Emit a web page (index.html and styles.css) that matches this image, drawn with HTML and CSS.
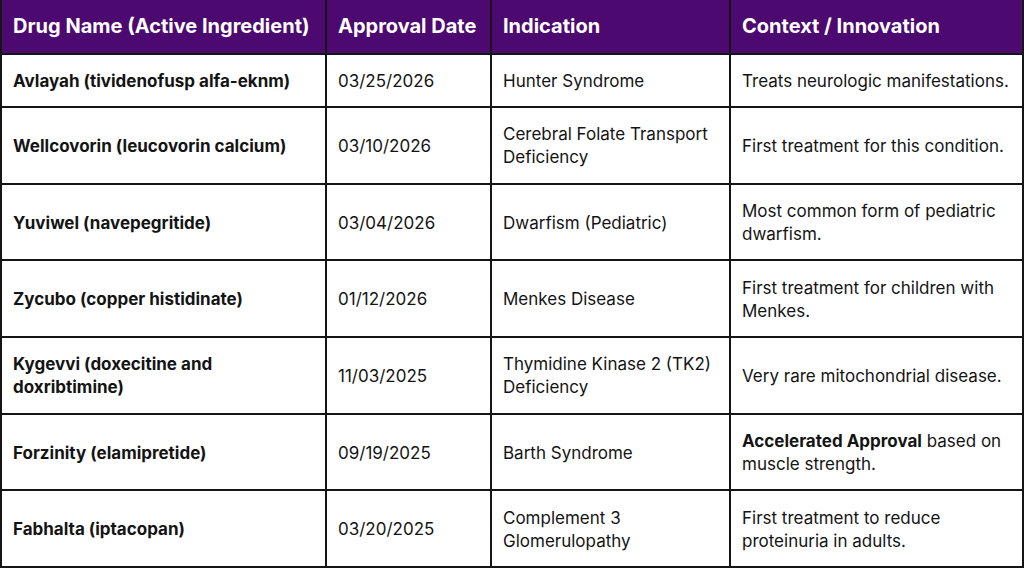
FILE: index.html
```html
<!DOCTYPE html>
<html lang="en">
<head>
<meta charset="utf-8">
<title>Drug Approvals</title>
<link rel="stylesheet" href="styles.css">
</head>
<body>
<table class="drugs">
  <colgroup>
    <col class="c1"><col class="c2"><col class="c3"><col class="c4">
  </colgroup>
  <thead>
    <tr>
      <th>Drug Name (Active Ingredient)</th>
      <th>Approval Date</th>
      <th>Indication</th>
      <th>Context / Innovation</th>
    </tr>
  </thead>
  <tbody>
    <tr class="short">
      <td class="name">Avlayah (tividenofusp alfa-eknm)</td>
      <td>03/25/2026</td>
      <td>Hunter Syndrome</td>
      <td>Treats neurologic manifestations.</td>
    </tr>
    <tr>
      <td class="name">Wellcovorin (leucovorin calcium)</td>
      <td>03/10/2026</td>
      <td>Cerebral Folate Transport Deficiency</td>
      <td>First treatment for this condition.</td>
    </tr>
    <tr>
      <td class="name">Yuviwel (navepegritide)</td>
      <td>03/04/2026</td>
      <td>Dwarfism (Pediatric)</td>
      <td>Most common form of pediatric dwarfism.</td>
    </tr>
    <tr>
      <td class="name">Zycubo (copper histidinate)</td>
      <td>01/12/2026</td>
      <td>Menkes Disease</td>
      <td>First treatment for children with Menkes.</td>
    </tr>
    <tr>
      <td class="name">Kygevvi (doxecitine and doxribtimine)</td>
      <td>11/03/2025</td>
      <td>Thymidine Kinase 2 (TK2) Deficiency</td>
      <td>Very rare mitochondrial disease.</td>
    </tr>
    <tr>
      <td class="name">Forzinity (elamipretide)</td>
      <td>09/19/2025</td>
      <td>Barth Syndrome</td>
      <td><strong>Accelerated Approval</strong> based on muscle strength.</td>
    </tr>
    <tr>
      <td class="name">Fabhalta (iptacopan)</td>
      <td>03/20/2025</td>
      <td>Complement 3 Glomerulopathy</td>
      <td>First treatment to reduce proteinuria in adults.</td>
    </tr>
  </tbody>
</table>
</body>
</html>
```

FILE: styles.css
```css
html, body {
  margin: 0;
  padding: 0;
  background: #ffffff;
}

body {
  font-family: "Inter", "Liberation Sans", sans-serif;
  color: #141414;
}

.drugs {
  width: 1024px;
  border-collapse: separate;
  border-spacing: 0;
  table-layout: fixed;
}

.c1 { width: 327px; }
.c2 { width: 165px; }
.c3 { width: 239px; }
.c4 { width: 293px; }

.drugs th,
.drugs td {
  border-right: 2px solid #151515;
  border-bottom: 2px solid #151515;
  text-align: left;
  vertical-align: middle;
  padding: 15px 8px 13px 11px;
}

.drugs th:first-child,
.drugs td:first-child {
  border-left: 2px solid #151515;
}

.drugs th {
  background: #4c0a70;
  color: #ffffff;
  font-size: 20px;
  font-weight: 700;
  line-height: 24px;
  padding-top: 14px;
  padding-bottom: 15px;
}

.drugs td {
  font-size: 17px;
  font-weight: 400;
  line-height: 23px;
  height: 46.7px;
}

.drugs tr.short td {
  height: 23px;
}

.drugs td.name,
.drugs td strong {
  font-weight: 700;
}
```
